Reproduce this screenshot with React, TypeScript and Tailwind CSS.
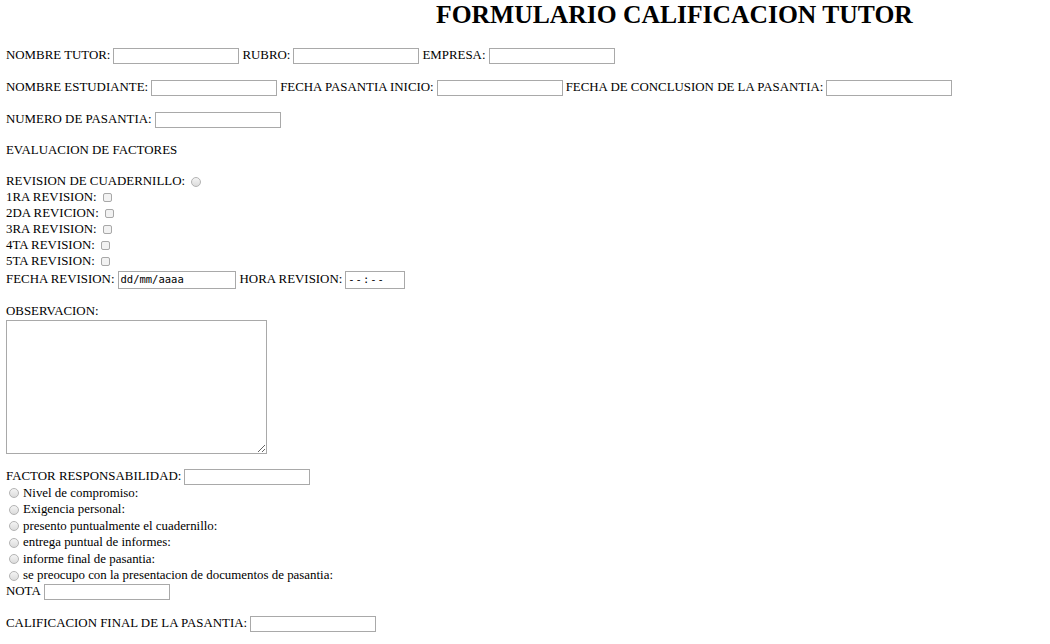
import React from "react";

function TextBox({ w = 126 }: { w?: number }) {
  return (
    <input
      type="text"
      style={{ width: w }}
      className="h-[16px] shrink-0 border border-[#a9a9a9] bg-white px-[2px] text-[11px] outline-none"
    />
  );
}

function Check() {
  return (
    <span className="ml-[6px] inline-block h-[9px] w-[9px] shrink-0 rounded-[2px] border border-[#a8a8a8] bg-[#f2f2f2]" />
  );
}

function Radio() {
  return (
    <span className="inline-block h-[10px] w-[10px] shrink-0 rounded-full border border-[#b3b3b3] bg-gradient-to-b from-[#f4f4f4] to-[#dcdcdc]" />
  );
}

const revisiones = [
  "1RA REVISION:",
  "2DA REVICION:",
  "3RA REVISION:",
  "4TA REVISION:",
  "5TA REVISION:",
];

const factores = [
  "Nivel de compromiso:",
  "Exigencia personal:",
  "presento puntualmente el cuadernillo:",
  "entrega puntual de informes:",
  "informe final de pasantia:",
  "se preocupo con la presentacion de documentos de pasantia:",
];

export default function App() {
  return (
    <div
      className="h-[644px] w-[1050px] overflow-hidden bg-white px-[6px] text-[12.9px] text-black"
      style={{ fontFamily: '"Liberation Serif", "Times New Roman", serif' }}
    >
      {/* Title */}
      <div className="flex h-[32px] items-center pl-[430px] pb-[2px] text-[25.6px] font-bold leading-none">
        FORMULARIO CALIFICACION TUTOR
      </div>

      {/* Datos generales */}
      <div className="mt-[16px] flex h-[16px] items-center gap-[3px] whitespace-nowrap">
        <span>NOMBRE TUTOR:</span>
        <TextBox />
        <span>RUBRO:</span>
        <TextBox />
        <span>EMPRESA:</span>
        <TextBox />
      </div>
      <div className="mt-[16px] flex h-[16px] items-center gap-[3px] whitespace-nowrap">
        <span>NOMBRE ESTUDIANTE:</span>
        <TextBox />
        <span>FECHA PASANTIA INICIO:</span>
        <TextBox />
        <span>FECHA DE CONCLUSION DE LA PASANTIA:</span>
        <TextBox />
      </div>
      <div className="mt-[16px] flex h-[16px] items-center gap-[3px] whitespace-nowrap">
        <span>NUMERO DE PASANTIA:</span>
        <TextBox />
      </div>

      <div className="mt-[15px] flex h-[16px] items-center">EVALUACION DE FACTORES</div>

      {/* Revision de cuadernillo */}
      <div className="mt-[14px] flex h-[16px] items-center gap-[6px] pt-[1px]">
        <span>REVISION DE CUADERNILLO:</span>
        <Radio />
      </div>
      {revisiones.map((r) => (
        <div key={r} className="flex h-[16px] items-center pt-[1px]">
          <span>{r}</span>
          <Check />
        </div>
      ))}
      <div className="mt-[2px] flex h-[18px] items-center gap-[3px]">
        <span>FECHA REVISION:</span>
        <div
          className="flex h-[18px] w-[118px] items-center border border-[#a9a9a9] px-[2px] text-[10.5px]"
          style={{ fontFamily: '"DejaVu Sans Mono", "Liberation Mono", monospace' }}
        >
          dd/mm/aaaa
        </div>
        <span className="ml-[1px]">HORA REVISION:</span>
        <div
          className="flex h-[18px] w-[60px] items-center border border-[#a9a9a9] px-[2px] text-[10.5px] tracking-[1px]"
          style={{ fontFamily: '"DejaVu Sans Mono", "Liberation Mono", monospace' }}
        >
          --:--
        </div>
      </div>

      {/* Observacion */}
      <div className="mt-[14px] flex h-[16px] items-center pt-[1px]">OBSERVACION:</div>
      <textarea className="mt-[1px] block h-[134px] w-[261px] border border-[#a9a9a9] bg-white outline-none" />

      {/* Factor responsabilidad */}
      <div className="mt-[15px] flex h-[16px] items-center gap-[3px]">
        <span>FACTOR RESPONSABILIDAD:</span>
        <TextBox />
      </div>
      {factores.map((f) => (
        <div key={f} className="flex h-[16.5px] items-center gap-[4px] pl-[3px]">
          <Radio />
          <span>{f}</span>
        </div>
      ))}
      <div className="flex h-[16px] items-center gap-[3px]">
        <span>NOTA</span>
        <TextBox />
      </div>

      <div className="mt-[16px] flex h-[16px] items-center gap-[3px]">
        <span>CALIFICACION FINAL DE LA PASANTIA:</span>
        <TextBox />
      </div>
    </div>
  );
}
